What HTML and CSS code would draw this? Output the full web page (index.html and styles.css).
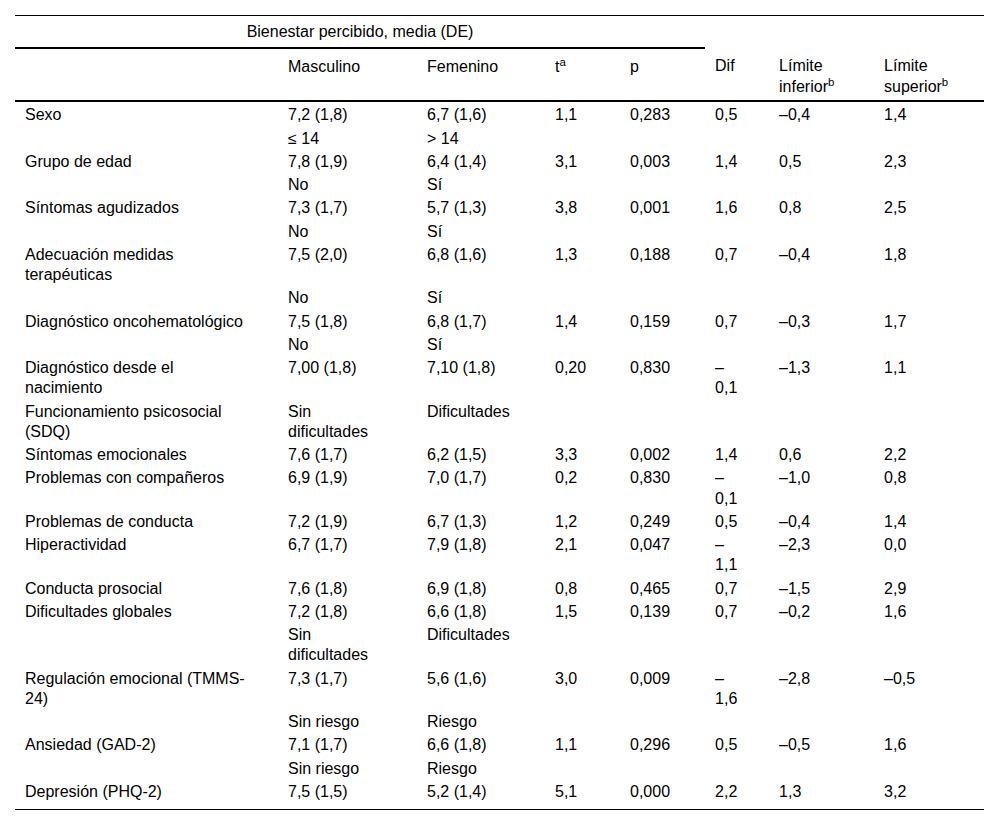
FILE: index.html
```html
<!DOCTYPE html>
<html lang="es">
<head>
<meta charset="utf-8">
<title>Bienestar percibido</title>
<link rel="stylesheet" href="styles.css">
</head>
<body>
<div class="wrap">
<table class="t">
<colgroup>
<col class="c0"><col class="c1"><col class="c2"><col class="c3"><col class="c4"><col class="c5"><col class="c6"><col class="c7">
</colgroup>
<thead>
<tr class="h1">
<th colspan="5" class="group">Bienestar percibido, media (DE)</th>
<th colspan="3" class="blank"></th>
</tr>
<tr class="h2">
<th></th>
<th>Masculino</th>
<th>Femenino</th>
<th>t<sup>a</sup></th>
<th>p</th>
<th>Dif</th>
<th>Límite inferior<sup>b</sup></th>
<th>Límite superior<sup>b</sup></th>
</tr>
</thead>
<tbody>
<tr class="first"><td>Sexo</td><td>7,2 (1,8)</td><td>6,7 (1,6)</td><td>1,1</td><td>0,283</td><td>0,5</td><td>–0,4</td><td>1,4</td></tr>
<tr><td></td><td>≤ 14</td><td>&gt; 14</td><td></td><td></td><td></td><td></td><td></td></tr>
<tr><td>Grupo de edad</td><td>7,8 (1,9)</td><td>6,4 (1,4)</td><td>3,1</td><td>0,003</td><td>1,4</td><td>0,5</td><td>2,3</td></tr>
<tr><td></td><td>No</td><td>Sí</td><td></td><td></td><td></td><td></td><td></td></tr>
<tr><td>Síntomas agudizados</td><td>7,3 (1,7)</td><td>5,7 (1,3)</td><td>3,8</td><td>0,001</td><td>1,6</td><td>0,8</td><td>2,5</td></tr>
<tr><td></td><td>No</td><td>Sí</td><td></td><td></td><td></td><td></td><td></td></tr>
<tr><td>Adecuación medidas terapéuticas</td><td>7,5 (2,0)</td><td>6,8 (1,6)</td><td>1,3</td><td>0,188</td><td>0,7</td><td>–0,4</td><td>1,8</td></tr>
<tr><td></td><td>No</td><td>Sí</td><td></td><td></td><td></td><td></td><td></td></tr>
<tr><td>Diagnóstico oncohematológico</td><td>7,5 (1,8)</td><td>6,8 (1,7)</td><td>1,4</td><td>0,159</td><td>0,7</td><td>–0,3</td><td>1,7</td></tr>
<tr><td></td><td>No</td><td>Sí</td><td></td><td></td><td></td><td></td><td></td></tr>
<tr><td>Diagnóstico desde el nacimiento</td><td>7,00 (1,8)</td><td>7,10 (1,8)</td><td>0,20</td><td>0,830</td><td>–0,1</td><td>–1,3</td><td>1,1</td></tr>
<tr><td>Funcionamiento psicosocial (SDQ)</td><td>Sin dificultades</td><td>Dificultades</td><td></td><td></td><td></td><td></td><td></td></tr>
<tr><td>Síntomas emocionales</td><td>7,6 (1,7)</td><td>6,2 (1,5)</td><td>3,3</td><td>0,002</td><td>1,4</td><td>0,6</td><td>2,2</td></tr>
<tr><td>Problemas con compañeros</td><td>6,9 (1,9)</td><td>7,0 (1,7)</td><td>0,2</td><td>0,830</td><td>–0,1</td><td>–1,0</td><td>0,8</td></tr>
<tr><td>Problemas de conducta</td><td>7,2 (1,9)</td><td>6,7 (1,3)</td><td>1,2</td><td>0,249</td><td>0,5</td><td>–0,4</td><td>1,4</td></tr>
<tr><td>Hiperactividad</td><td>6,7 (1,7)</td><td>7,9 (1,8)</td><td>2,1</td><td>0,047</td><td>–1,1</td><td>–2,3</td><td>0,0</td></tr>
<tr><td>Conducta prosocial</td><td>7,6 (1,8)</td><td>6,9 (1,8)</td><td>0,8</td><td>0,465</td><td>0,7</td><td>–1,5</td><td>2,9</td></tr>
<tr><td>Dificultades globales</td><td>7,2 (1,8)</td><td>6,6 (1,8)</td><td>1,5</td><td>0,139</td><td>0,7</td><td>–0,2</td><td>1,6</td></tr>
<tr><td></td><td>Sin dificultades</td><td>Dificultades</td><td></td><td></td><td></td><td></td><td></td></tr>
<tr><td>Regulación emocional (TMMS-24)</td><td>7,3 (1,7)</td><td>5,6 (1,6)</td><td>3,0</td><td>0,009</td><td>–1,6</td><td>–2,8</td><td>–0,5</td></tr>
<tr><td></td><td>Sin riesgo</td><td>Riesgo</td><td></td><td></td><td></td><td></td><td></td></tr>
<tr><td>Ansiedad (GAD-2)</td><td>7,1 (1,7)</td><td>6,6 (1,8)</td><td>1,1</td><td>0,296</td><td>0,5</td><td>–0,5</td><td>1,6</td></tr>
<tr><td></td><td>Sin riesgo</td><td>Riesgo</td><td></td><td></td><td></td><td></td><td></td></tr>
<tr class="last"><td>Depresión (PHQ-2)</td><td>7,5 (1,5)</td><td>5,2 (1,4)</td><td>5,1</td><td>0,000</td><td>2,2</td><td>1,3</td><td>3,2</td></tr>
</tbody>
</table>
</div>
</body>
</html>
```

FILE: styles.css
```css
html, body {
  margin: 0;
  padding: 0;
  background: #fff;
}

.wrap {
  padding: 15px 16px 0 15px;
}

.t {
  width: 969px;
  table-layout: fixed;
  border-collapse: collapse;
  font-family: "Liberation Sans", Arial, sans-serif;
  font-size: 16px;
  line-height: 20.25px;
  color: #000;
}

.c0 { width: 263px; }
.c1 { width: 139px; }
.c2 { width: 128px; }
.c3 { width: 75px; }
.c4 { width: 85px; }
.c5 { width: 64px; }
.c6 { width: 105px; }
.c7 { width: 110px; }

.t th,
.t td {
  text-align: left;
  vertical-align: top;
  font-weight: normal;
  padding: 1.5px 10px 1.5px 10px;
}

.t thead .h1 th {
  border-top: 1px solid #000;
  padding-top: 6px;
  padding-bottom: 5px;
}

.t thead .h1 .group {
  text-align: center;
  border-bottom: 2px solid #000;
}

.t thead .h2 th {
  border-bottom: 2px solid #000;
  padding-top: 8px;
  padding-bottom: 3px;
}

.t td:nth-child(1), .t .h2 th:nth-child(1) { padding-right: 28px; }
.t td:nth-child(2), .t .h2 th:nth-child(2) { padding-right: 39px; }
.t td:nth-child(6), .t .h2 th:nth-child(6) { padding-right: 28px; }

.t sup {
  font-size: 11.5px;
  line-height: 0;
  vertical-align: 6px;
}

.t tr.first td {
  padding-top: 3.5px;
}

.t tr.last td {
  padding-bottom: 7px;
  border-bottom: 1px solid #000;
}
```
